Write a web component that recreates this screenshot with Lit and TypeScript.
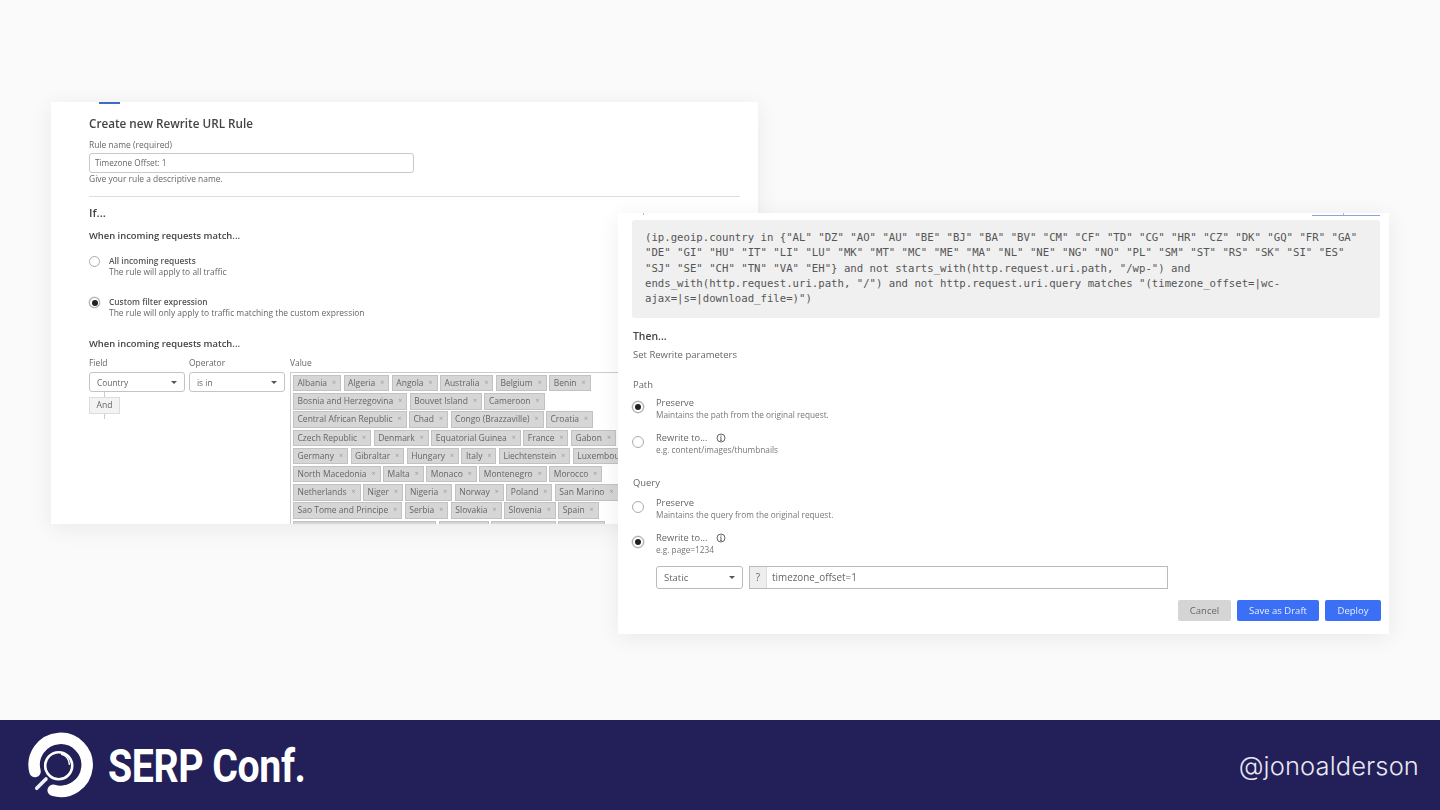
import { LitElement, html, css } from "lit";
import { customElement } from "lit/decorators.js";

const ROWS = [
  ["Albania", "Algeria", "Angola", "Australia", "Belgium", "Benin"],
  ["Bosnia and Herzegovina", "Bouvet Island", "Cameroon"],
  ["Central African Republic", "Chad", "Congo (Brazzaville)", "Croatia"],
  ["Czech Republic", "Denmark", "Equatorial Guinea", "France", "Gabon"],
  ["Germany", "Gibraltar", "Hungary", "Italy", "Liechtenstein", "Luxembourg"],
  ["North Macedonia", "Malta", "Monaco", "Montenegro", "Morocco"],
  ["Netherlands", "Niger", "Nigeria", "Norway", "Poland", "San Marino"],
  ["Sao Tome and Principe", "Serbia", "Slovakia", "Slovenia", "Spain"],
  ["Svalbard and Jan Mayen Islands", "Sweden", "Switzerland", "Tunisia"],
];

const CODE = `(ip.geoip.country in {"AL" "DZ" "AO" "AU" "BE" "BJ" "BA" "BV" "CM" "CF" "TD" "CG" "HR" "CZ" "DK" "GQ" "FR" "GA"
"DE" "GI" "HU" "IT" "LI" "LU" "MK" "MT" "MC" "ME" "MA" "NL" "NE" "NG" "NO" "PL" "SM" "ST" "RS" "SK" "SI" "ES"
"SJ" "SE" "CH" "TN" "VA" "EH"} and not starts_with(http.request.uri.path, "/wp-") and
ends_with(http.request.uri.path, "/") and not http.request.uri.query matches "(timezone_offset=|wc-
ajax=|s=|download_file=)")`;

const info = html`<svg class="info" viewBox="0 0 10 10" width="10" height="10">
  <circle cx="5" cy="5" r="4" fill="none" stroke="#555" stroke-width="0.9"></circle>
  <path d="M5 4.4V7.4M4.2 7.4H5.8M4.3 4.4H5" fill="none" stroke="#555" stroke-width="0.9"></path>
  <circle cx="5" cy="2.9" r="0.6" fill="#555"></circle>
</svg>`;

@customElement("app-root")
export class AppRoot extends LitElement {
  static styles = css`
    :host { display: block; width: 1440px; height: 810px; overflow: hidden; background: #fafafa;
      font-family: "Open Sans", "Liberation Sans", sans-serif; color: #5c5c5c; }
    * { box-sizing: border-box; }
    .stage { position: relative; height: 720px; }
    .win { position: absolute; background: #fff; overflow: hidden; box-shadow: 0 4px 22px rgba(0,0,0,.07); filter: blur(.4px); }
    .left { left: 51px; top: 102px; width: 707px; height: 422px; padding: 13px 18px 0 38px; }
    .right { left: 618px; top: 213px; width: 771px; height: 421px; padding: 7px 9px 0 14px; }
    .tab-l { position: absolute; left: 48px; top: 0; width: 21px; height: 2px; background: #3f6bc4; }
    .tab-r { position: absolute; left: 694px; top: 2px; width: 68px; height: 1px; background: #8fa3d6; }
    .tick-r { position: absolute; left: 725px; top: 0; width: 1px; height: 2px; background: #bbb; }
    .dot { position: absolute; left: 25px; top: 0; width: 1px; height: 2px; background: #bbb; }
    .h1 { font-size: 11.7px; font-weight: 600; line-height: 16px; color: #444; }
    .h2 { font-size: 11.4px; font-weight: 600; line-height: 16px; color: #444; }
    .h3 { font-size: 9.4px; font-weight: 600; line-height: 12px; color: #444; }
    .lbl { font-size: 8.45px; line-height: 12px; color: #666; }
    .input { width: 325px; height: 20px; margin-top: 2px; border: 1px solid #c9c9c9; border-radius: 3px;
      padding: 0 5px; font-size: 8.2px; line-height: 18px; color: #666; }
    .hr { height: 1px; background: #ddd; margin-top: 11px; }
    .opt { display: flex; gap: 9px; align-items: flex-start; }
    .radio { flex: none; width: 11px; height: 11px; border: 1px solid #aaa; border-radius: 50%;
      background: #fff; display: flex; align-items: center; justify-content: center; margin-top: 1px; }
    .radio.on { box-shadow: 0 0 0 .5px #ccc; }
    .radio.on::after { content: ""; width: 6px; height: 6px; border-radius: 50%; background: #222; }
    .t { font-size: 8.35px; font-weight: 600; line-height: 11px; color: #555; }
    .d { font-size: 8.45px; line-height: 12px; color: #666; }
    .filter { display: grid; grid-template-columns: 96px 96px 1fr; column-gap: 4px; margin-top: 7px; width: 700px; }
    .filter .v { margin-left: 1px; }
    .sel { height: 20px; border: 1px solid #c4c4c4; border-radius: 3px; display: flex; align-items: center;
      justify-content: space-between; padding: 0 7px; font-size: 8.4px; color: #666; margin-top: 3px; }
    .caret { width: 0; height: 0; border-left: 3.5px solid transparent; border-right: 3.5px solid transparent; border-top: 3.5px solid #555; }
    .and-wrap { display: flex; flex-direction: column; align-items: flex-start; }
    .tick { width: 1px; height: 5px; background: #ccc; margin-left: 15px; }
    .and { width: 31px; height: 17px; background: #f3f3f3; border: 1px solid #ddd; font-size: 8.6px; line-height: 15px; text-align: center; color: #666; }
    .tags { margin-top: 3px; border: 1px solid #ccc; border-right: 0; padding: 2px 0 0 2px; width: 430px; height: 160px; overflow: hidden; }
    .row { display: flex; gap: 2.5px; height: 18.2px; white-space: nowrap; }
    .tag { height: 16.4px; background: #d6d6d6; border: 1px solid #c2c2c2; padding: 0 4px 0 3.5px; font-size: 8.5px; line-height: 14.4px; color: #666; display: flex; gap: 5px; }
    .tag i { font-style: normal; font-size: 7px; color: #999; }
    .code { height: 98px; background: #f0f0f0; border-radius: 3px; padding: 10px 0 0 13px;
      font-family: "DejaVu Sans Mono", "Liberation Mono", monospace; font-size: 10.67px; line-height: 15.3px;
      color: #555; white-space: pre; overflow: hidden; }
    .then { font-size: 10.4px; font-weight: 600; line-height: 14px; color: #444; margin: 11px 0 0 1px; }
    .set { font-size: 9.5px; line-height: 12px; color: #666; margin: 6px 0 0 1px; }
    .sec { font-size: 9.4px; line-height: 12px; color: #666; margin-left: 1px; }
    .p { display: flex; align-items: flex-start; gap: 12px; }
    .p .radio { width: 12px; height: 12px; margin-top: 4px; }
    .pt { font-size: 9.3px; line-height: 12px; color: #666; display: flex; align-items: center; gap: 8px; }
    .pd { font-size: 8.25px; line-height: 12px; color: #777; }
    .info { display: block; }
    .ctrl { display: flex; gap: 6px; margin: 10px 0 0 24px; }
    .sel2 { width: 87px; height: 23px; border: 1px solid #bbb; border-radius: 3px; display: flex; align-items: center;
      justify-content: space-between; padding: 0 7px 0 7px; font-size: 9.5px; color: #666; }
    .pre { display: flex; width: 419px; height: 23px; border: 1px solid #bbb; font-size: 9.9px; line-height: 21px; color: #666; }
    .pre b { width: 17px; background: #eee; border-right: 1px solid #ddd; font-weight: 400; text-align: center; }
    .pre span { padding-left: 5px; }
    .btns { display: flex; justify-content: flex-end; gap: 6px; margin: 11px -1px 0 0; }
    .btn { height: 21px; border-radius: 2px; font-size: 9.5px; line-height: 21px; text-align: center; color: #e8eeff; background: #3a6ff6; }
    .btn.c { background: #d5d5d5; color: #666; width: 53px; }
    .btn.s { width: 82px; }
    .btn.y { width: 56px; }
    footer { height: 90px; background: #231f58; display: flex; align-items: center; justify-content: space-between; padding: 0 21px 0 27px; }
    .brand { display: flex; align-items: center; gap: 15px; }
    .name { font-family: Roboto, "Liberation Sans", sans-serif; font-size: 47px; font-weight: 700; color: #fff; line-height: 50px;
      letter-spacing: -.5px; width: 198px; white-space: nowrap; transform: scaleX(.835) translateY(1px); transform-origin: left center; }
    .handle { font-family: Inter, "Noto Sans", sans-serif; font-weight: 300; font-size: 25.5px; color: #e8e8f4; letter-spacing: .12px; }
  `;

  private opt(on: boolean, t: string, d: string, top: number) {
    return html`<div class="opt" style="margin-top:${top}px">
      <span class="radio ${on ? "on" : ""}"></span>
      <div><div class="t">${t}</div><div class="d">${d}</div></div>
    </div>`;
  }

  private param(on: boolean, t: string, d: string, top: number, hasInfo = false) {
    return html`<div class="p" style="margin-top:${top}px">
      <span class="radio ${on ? "on" : ""}"></span>
      <div><div class="pt">${t}${hasInfo ? info : ""}</div><div class="pd">${d}</div></div>
    </div>`;
  }

  render() {
    return html`
      <div class="stage">
        <section class="win left">
          <span class="tab-l"></span>
          <div class="h1">Create new Rewrite URL Rule</div>
          <div class="lbl" style="margin-top:8px">Rule name (required)</div>
          <div class="input">Timezone Offset: 1</div>
          <div class="lbl">Give your rule a descriptive name.</div>
          <div class="hr"></div>
          <div class="h2" style="margin-top:8px">If...</div>
          <div class="h3" style="margin-top:9px">When incoming requests match...</div>
          ${this.opt(false, "All incoming requests", "The rule will apply to all traffic", 13)}
          ${this.opt(true, "Custom filter expression", "The rule will only apply to traffic matching the custom expression", 18)}
          <div class="h3" style="margin-top:19px">When incoming requests match...</div>
          <div class="filter">
            <div>
              <div class="lbl">Field</div>
              <div class="sel"><span>Country</span><span class="caret"></span></div>
              <div class="and-wrap"><span class="tick"></span><div class="and">And</div><span class="tick"></span></div>
            </div>
            <div>
              <div class="lbl">Operator</div>
              <div class="sel"><span>is in</span><span class="caret"></span></div>
            </div>
            <div class="v">
              <div class="lbl">Value</div>
              <div class="tags">
                ${ROWS.map((r) => html`<div class="row">${r.map((x) => html`<span class="tag">${x}<i>×</i></span>`)}</div>`)}
              </div>
            </div>
          </div>
        </section>

        <section class="win right">
          <span class="tab-r"></span>
          <span class="tick-r"></span>
          <span class="dot"></span>
          <div class="code">${CODE}</div>
          <div class="then">Then...</div>
          <div class="set">Set Rewrite parameters</div>
          <div class="sec" style="margin-top:18px">Path</div>
          ${this.param(true, "Preserve", "Maintains the path from the original request.", 6)}
          ${this.param(false, "Rewrite to...", "e.g. content/images/thumbnails", 11, true)}
          <div class="sec" style="margin-top:21px">Query</div>
          ${this.param(false, "Preserve", "Maintains the query from the original request.", 8)}
          ${this.param(true, "Rewrite to...", "e.g. page=1234", 11, true)}
          <div class="ctrl">
            <div class="sel2"><span>Static</span><span class="caret"></span></div>
            <div class="pre"><b>?</b><span>timezone_offset=1</span></div>
          </div>
          <div class="btns">
            <div class="btn c">Cancel</div>
            <div class="btn s">Save as Draft</div>
            <div class="btn y">Deploy</div>
          </div>
        </section>
      </div>
      <footer>
        <div class="brand">
          <svg width="66" height="68" viewBox="0 0 66 68" fill="none">
            <path d="M8 40.5A26.5 26.5 0 1 1 26.2 59.3" stroke="#fff" stroke-width="11.5" stroke-linecap="round"></path>
            <circle cx="31.7" cy="34.7" r="13.5" stroke="#fff" stroke-width="2.6"></circle>
            <path d="M34.7 23.3A11 11 0 0 1 42.3 33.3" stroke="#fff" stroke-width="1.5" stroke-linecap="round"></path>
            <path d="M9.7 57.3L19 48" stroke="#f0f0f4" stroke-width="3.6" stroke-linecap="round"></path>
          </svg>
          <div class="name">SERP Conf.</div>
        </div>
        <div class="handle">@jonoalderson</div>
      </footer>
    `;
  }
}
